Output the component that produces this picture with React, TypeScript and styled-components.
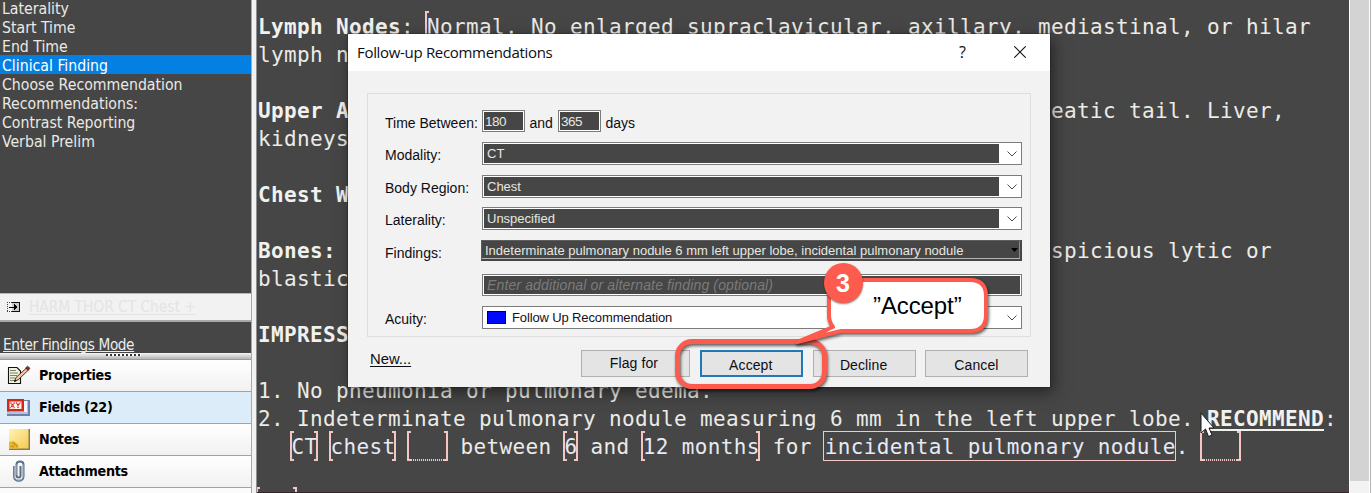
import React from "react";
import styled, { createGlobalStyle, css } from "styled-components";

const DARK = "#464646";
const PINK = "#f6c6c2";
const RED = "#fd5b4d";
const UI = `"DejaVu Sans Condensed", "DejaVu Sans", sans-serif`;
const ARIAL = `"Liberation Sans", sans-serif`;

const Global = createGlobalStyle`
  * { box-sizing: border-box; }
  body { margin: 0; overflow: hidden; background: ${DARK}; }
`;

const Page = styled.div`
  position: relative;
  display: flex;
  width: 1372px;
  height: 493px;
  overflow: hidden;
  background: #f0f0f0;
`;

/* ---------- sidebar ---------- */

const Sidebar = styled.aside`
  display: flex;
  flex-direction: column;
  width: 252px;
  border-right: 1px solid #a8a8a8;
  background: ${DARK};
  font-family: ${UI};
  overflow: hidden;
`;

const FieldList = styled.div`
  height: 295px;
  margin-top: -2px;
  flex: none;
`;

const FieldItem = styled.div<{ $active?: boolean }>`
  height: 19px;
  line-height: 22px;
  padding-left: 2px;
  font-size: 15.7px;
  white-space: nowrap;
  color: ${(p) => (p.$active ? "#ffffff" : "#ebe9e4")};
  background: ${(p) => (p.$active ? "#0380e2" : "transparent")};
`;

const TemplateBar = styled.div`
  display: flex;
  align-items: center;
  flex: none;
  gap: 9px;
  height: 29px;
  padding-left: 7px;
  background: #f2f2f2;
  border-top: 1px solid #b8b8b8;
  border-bottom: 2px solid #a9a9a9;
`;

const TemplateLink = styled.a`
  font-size: 15.3px;
  line-height: 20px;
  white-space: nowrap;
  color: #e3e4e6;
  text-decoration: underline;
  text-underline-offset: 2px;
`;

const ModeBar = styled.div`
  height: 31px;
  flex: none;
  padding: 13px 0 0 3px;
`;

const ModeLink = styled.a`
  display: block;
  font-size: 15.2px;
  letter-spacing: -0.4px;
  line-height: 20px;
  color: #ececea;
  text-decoration: underline;
  text-underline-offset: 1px;
  text-decoration-thickness: 1px;
  text-decoration-skip-ink: none;
  white-space: nowrap;
`;

const Splitter = styled.div`
  display: flex;
  flex: none;
  height: 7px;
  padding: 1px 0 0 106px;
  background: linear-gradient(#f4f4f4, #b4b4b4);
  border-bottom: 1px solid #9a9a9a;
`;

const Grip = styled.div`
  width: 35px;
  height: 2px;
  background: repeating-linear-gradient(90deg, #33333f 0 2px, #ffffff 2px 4px);
`;

const Tab = styled.div<{ $active?: boolean }>`
  display: flex;
  flex: none;
  align-items: center;
  height: 32px;
  padding: 0 0 2px 6px;
  border-bottom: 1px solid #a2a2a2;
  background: ${(p) => (p.$active ? "#dcecf9" : "linear-gradient(#ffffff, #f1f1f1)")};
`;

const TabIcon = styled.span`
  display: flex;
  width: 33px;
`;

const TabLabel = styled.span`
  font-size: 14.2px;
  letter-spacing: -0.3px;
  font-weight: bold;
  color: #000;
`;

const TabFiller = styled.div`
  flex: 1;
  background: #fbfbfb;
`;

const Gutter = styled.div`
  width: 5px;
  flex: none;
  background: #f1f1f1;
  border-right: 1px solid #8f8f8f;
`;

/* ---------- report ---------- */

const Report = styled.main`
  flex: 1;
  min-width: 0;
  padding: 12px 0 0 1px;
  background: ${DARK};
  border-bottom: 1px solid #33272b;
  overflow: hidden;
  font-family: "DejaVu Sans Mono", monospace;
  font-size: 21px;
  letter-spacing: 0.357px;
  color: #ecebe6;
`;

const Line = styled.div<{ $indent?: boolean }>`
  height: 28px;
  line-height: 30px;
  white-space: pre;
  padding-left: ${(p) => (p.$indent ? "33.5px" : "0")};
`;

const Tail = styled.span<{ $cols: number }>`
  margin-left: ${(p) => p.$cols * 13}px;
`;

const Strong = styled.b<{ $underline?: boolean }>`
  color: #f1f1ee;
  ${(p) =>
    p.$underline &&
    css`
      text-decoration: underline;
      text-decoration-thickness: 2px;
      text-underline-offset: 3px;
    `}
`;

const corner = (pos: string, size: string) =>
  `linear-gradient(${PINK}, ${PINK}) ${pos} / ${size} no-repeat`;

const Slot = styled.span<{ $kind?: "open" | "box" | "blank" }>`
  display: inline-block;
  height: 30px;
  line-height: 32px;
  vertical-align: top;
  margin: -1px 0 0 -2px;
  padding: 0 0 0 2px;
  color: #e6e9f6;
  background: ${(p) =>
    p.$kind === "box"
      ? "none"
      : [
          corner("left top", "2px 100%"),
          corner("left top", "4px 2px"),
          corner("left bottom", "4px 2px"),
          ...(p.$kind === "open"
            ? []
            : [
                corner("right top", "2px 100%"),
                corner("right top", "4px 2px"),
                corner("right bottom", "4px 2px"),
              ]),
          ...(p.$kind === "blank"
            ? [`repeating-linear-gradient(90deg, ${PINK} 0 1px, transparent 1px 2px) left bottom / 100% 2px no-repeat`]
            : []),
        ].join(", ")};
  box-shadow: ${(p) => (p.$kind === "box" ? `inset 0 0 0 1px ${PINK}` : "none")};
`;

const ScrollTrack = styled.div`
  width: 23px;
  flex: none;
  background: #f3f3f3;
  border-left: 1px solid #fff;
  padding-right: 3px;
  box-shadow: inset -1px 0 0 #fff, inset -2px 0 0 #b4b4b4, inset -3px 0 0 #fff;
`;

const ScrollThumb = styled.div`
  height: 481px;
  background: #d3d3d3;
`;

/* ---------- dialog ---------- */

const Dialog = styled.section`
  position: absolute;
  left: 348px;
  top: 34px;
  width: 702px;
  height: 353px;
  background: #f2f2f2;
  box-shadow: 0 0 0 1px rgba(30, 30, 30, 0.35), 3px 5px 14px rgba(0, 0, 0, 0.5);
  font-family: ${ARIAL};
  font-size: 14px;
  color: #0d0d14;
`;

const TitleBar = styled.header`
  display: flex;
  align-items: center;
  height: 37px;
  padding: 0 24px 1px 9px;
  background: #fff;
`;

const Title = styled.h1`
  flex: 1;
  margin: 0;
  font: 400 15px/20px "Open Sans", sans-serif;
  letter-spacing: -0.32px;
`;

const Help = styled.span`
  width: 10px;
  margin-right: 45px;
  font: 400 16px/20px "Open Sans", sans-serif;
`;

const Group = styled.div`
  height: 244px;
  margin: 22px 19px 0 19px;
  padding: 16px 8px 0 17px;
  border: 1px solid #dedede;
`;

const Row = styled.div<{ $gap?: number; $h?: number }>`
  display: flex;
  align-items: flex-start;
  height: ${(p) => p.$h ?? 23}px;
  margin-top: ${(p) => p.$gap ?? 0}px;
`;

const Label = styled.label`
  width: 97px;
  line-height: 16px;
  padding-top: 5px;
  white-space: nowrap;
`;

const NumberBox = styled.div`
  width: 43px;
  height: 22px;
  padding-left: 2px;
  border: 1px solid #7c7c7c;
  box-shadow: inset 0 0 0 1px #fff;
  background: ${DARK};
  color: #e8e6e0;
  font-size: 13.5px;
  line-height: 21px;
  letter-spacing: -0.5px;
`;

const Joiner = styled.span<{ $w: number }>`
  width: ${(p) => p.$w}px;
  padding: 5px 0 0 4.5px;
  line-height: 16px;
`;

const Combo = styled.div`
  display: flex;
  width: 540px;
  height: 23px;
  padding: 1px;
  border: 1px solid #7c7c7c;
  background: #fff;
  font-size: 13px;
`;

const ComboValue = styled.div<{ $light?: boolean }>`
  display: flex;
  align-items: center;
  flex: 1;
  gap: 6px;
  padding-left: 3px;
  background: ${(p) => (p.$light ? "#fff" : DARK)};
  color: ${(p) => (p.$light ? "#14101c" : "#e8e6e0")};
  letter-spacing: ${(p) => (p.$light ? "-0.13px" : "0")};
`;

const ComboArrow = styled.div`
  display: flex;
  align-items: center;
  justify-content: center;
  width: 21px;
  padding-left: 4px;
`;

const Swatch = styled.i`
  width: 19px;
  height: 13px;
  background: #0009fb;
  border: 1px solid #000040;
`;

const FindingsBox = styled.div`
  display: flex;
  flex: none;
  align-items: center;
  justify-content: space-between;
  width: 541px;
  height: 21px;
  padding: 0 2px 0 3px;
  background: ${DARK};
  border: 1px solid #5e5e5e;
  border-bottom: 2px solid ${DARK};
  border-right: 2px solid ${DARK};
  box-shadow: inset 0 -1px 0 #b5b5b5, inset -1px 0 0 #8a8a8a;
  color: #e8e6e0;
  font-size: 13px;
  letter-spacing: 0.01px;
  white-space: nowrap;
`;

const HintBox = styled.div`
  width: 540px;
  height: 22px;
  padding-left: 4px;
  border: 1px solid #7c7c7c;
  box-shadow: inset 0 0 0 1px #fff;
  background: ${DARK};
  color: #7b7b7b;
  font-style: italic;
  line-height: 21px;
  letter-spacing: 0.14px;
`;

const Footer = styled.footer`
  display: flex;
  padding: 13px 0 0 22px;
`;

const NewLink = styled.a`
  width: 211px;
  font-size: 14.8px;
  line-height: 19px;
  text-decoration: underline;
  text-underline-offset: 2px;
`;

const Button = styled.button<{ $default?: boolean; $w?: number }>`
  width: ${(p) => p.$w ?? 103}px;
  height: 27px;
  margin: 0 9.8px 0 0;
  padding: ${(p) => (p.$w ? "0 3px 2px 0" : "2px 1px 0 0")};
  border: ${(p) => (p.$default ? "2px solid #1f78b9" : "1px solid #b0b0b0")};
  background: #e4e4e4;
  color: #0d0d14;
  font: 14px ${ARIAL};
  letter-spacing: 0.1px;
  flex: none;
`;

/* ---------- annotation ---------- */

const Ring = styled.div`
  position: absolute;
  left: 675px;
  top: 339px;
  width: 152px;
  height: 50px;
  border: 5px solid ${RED};
  border-radius: 17px;
  filter: drop-shadow(1px 2px 1.5px rgba(0, 0, 0, 0.6));
`;

const Callout = styled.div`
  position: absolute;
  left: 790px;
  top: 258px;
  width: 206px;
  height: 94px;
`;

const CalloutShape = styled.svg`
  display: block;
  filter: drop-shadow(1px 2px 1.5px rgba(0, 0, 0, 0.6));
`;

const CalloutText = styled.span`
  position: absolute;
  left: 83px;
  top: 34px;
  font: 24px/28px ${ARIAL};
  letter-spacing: -0.1px;
  color: #000;
`;

const Badge = styled.span`
  position: absolute;
  left: 33.5px;
  top: 4.5px;
  width: 39px;
  height: 40px;
  border-radius: 50%;
  background: ${RED};
  color: #fff;
  font: bold 25px/41px ${ARIAL};
  text-align: center;
  box-shadow: 0 1px 2px rgba(0, 0, 0, 0.5);
`;

const Cursor = styled.svg`
  position: absolute;
  left: 1200px;
  top: 412px;
`;

/* ---------- icons ---------- */

const InsertIcon = () => (
  <svg width="13" height="10" viewBox="0 0 13 10" shapeRendering="crispEdges">
    <path d="M0 .5H5M0 9.5H5M.5 0V10" stroke="#444" strokeDasharray="1 1" fill="none" />
    <path d="M5 .5H12.5V9.5H5" stroke="#111" fill="#c9c9c9" />
    <path d="M2 5H8" stroke="#000" strokeWidth="1" />
    <path d="M7 2V8L10 5Z" fill="#000" />
  </svg>
);

const PropertiesIcon = () => (
  <svg width="25" height="20" viewBox="0 0 25 20">
    <path d="M2.5 2.5H11L14.5 6V18.5H2.5Z" fill="#f1f2dc" stroke="#111" strokeWidth="1.1" />
    <path d="M4 5.5H10M4 8H12M4 10.5H11M4 13H9M4 15.5H9" stroke="#7c8164" strokeWidth="1" />
    <path d="M8.5 16.5L10 12.500L20.500 3L22.500 5L12.500 14.500Z" fill="#f0c7a4" stroke="#31201c" strokeWidth=".9" />
    <path d="M19.5 3L21.5 1.2L24 3.3L22 5.5Z" fill="#8f2a22" stroke="#4a1210" strokeWidth=".7" />
    <path d="M8 17L9 14.5L10.5 16Z" fill="#111" />
  </svg>
);

const FieldsIcon = () => (
  <svg width="25" height="18" viewBox="0 0 25 18">
    <path d="M4 2H24V18H1V14H4Z" fill="#6b82ab" />
    <path d="M1 3H22V16H1Z" fill="#b4c2da" />
    <path d="M4 3H21V14H4Z" fill="#f4f6fb" />
    <rect x="2.250" y="2.250" width="14.500" height="10" fill="#fff2ee" stroke="#d3261b" strokeWidth="2.500" />
    <path d="M4.500 4.500L8.500 10M8.500 4.500L4.500 10M10 4.500L12 7L14.500 4.500M12 6.500V10" stroke="#cf3022" strokeWidth="1.400" strokeDasharray="1.500 .5" fill="none" />
  </svg>
);

const NotesIcon = () => (
  <svg width="25" height="22" viewBox="0 0 25 22">
    <defs>
      <linearGradient id="note" x1="0" y1="0" x2="1" y2="1">
        <stop offset="0" stopColor="#fff3b4" />
        <stop offset="1" stopColor="#f4cb52" />
      </linearGradient>
    </defs>
    <rect x="3" y="1" width="21" height="21" fill="#8b7a4c" />
    <rect x="3" y="1" width="19.500" height="19.500" fill="url(#note)" />
    <path d="M3 14C6 12.500 9 13 9.500 15C12 15 13 17.500 12.500 20.500H3Z" fill="#edb52c" />
    <path d="M6 15.500C8 14 10 15 8.500 17C10.500 16.500 12 18 10 19M5 18L8 19" stroke="#c08710" fill="none" />
  </svg>
);

const ClipIcon = () => (
  <svg width="25" height="22" viewBox="0 0 25 22" fill="none">
    <path d="M8 6V16.5C8 22 17.5 22 17.5 16.5V4.500C17.5 .5 10.5 .5 10.5 4.500V15.5C10.5 18.2 14.5 18.2 14.5 15.5V6" stroke="#5b6f89" strokeWidth="2" />
    <path d="M8.300 6V16.5C8.300 21.3 17 21.3 17 16.5V4.500M11 4.500V15" stroke="#c0ccd9" strokeWidth=".8" />
  </svg>
);

const Chevron = () => (
  <svg width="10" height="6" viewBox="0 0 10 6">
    <path d="M.5 .5L5 5L9.5 .5" stroke="#4a4a4a" strokeWidth="1" fill="none" />
  </svg>
);

const CloseIcon = () => (
  <svg width="12" height="12" viewBox="0 0 12 12">
    <path d="M.3 .3L11.700 11.700M11.700 .3L.3 11.700" stroke="#111" strokeWidth="1.1" />
  </svg>
);

/* ---------- data ---------- */

const fields = [
  "Laterality",
  "Start Time",
  "End Time",
  "Clinical Finding",
  "Choose Recommendation",
  "Recommendations:",
  "Contrast Reporting",
  "Verbal Prelim",
];

const tabs = [
  { label: "Properties", icon: <PropertiesIcon /> },
  { label: "Fields (22)", icon: <FieldsIcon />, active: true },
  { label: "Notes", icon: <NotesIcon /> },
  { label: "Attachments", icon: <ClipIcon /> },
];

const combos = [
  { label: "Modality:", value: "CT", gap: 10 },
  { label: "Body Region:", value: "Chest", gap: 10 },
  { label: "Laterality:", value: "Unspecified", gap: 9 },
];

export default function App() {
  return (
    <Page>
      <Global />
      <Sidebar>
        <FieldList>
          {fields.map((f) => (
            <FieldItem key={f} $active={f === "Clinical Finding"}>
              {f}
            </FieldItem>
          ))}
        </FieldList>
        <TemplateBar>
          <InsertIcon />
          <TemplateLink>HARM THOR CT Chest +</TemplateLink>
        </TemplateBar>
        <ModeBar>
          <ModeLink as="span">Enter Findings Mode</ModeLink>
        </ModeBar>
        <Splitter>
          <Grip />
        </Splitter>
        {tabs.map((t) => (
          <Tab key={t.label} $active={t.active}>
            <TabIcon>{t.icon}</TabIcon>
            <TabLabel>{t.label}</TabLabel>
          </Tab>
        ))}
        <TabFiller />
      </Sidebar>
      <Gutter />

      <Report>
        <Line>
          <Strong>Lymph Nodes</Strong>: <Slot $kind="open">N</Slot>ormal. No enlarged supraclavicular, axillary, mediastinal, or hilar
        </Line>
        <Line>lymph n</Line>
        <Line />
        <Line>
          <Strong>Upper A</Strong>
          <Tail $cols={54}>eatic tail. Liver,</Tail>
        </Line>
        <Line>kidneys</Line>
        <Line />
        <Line>
          <Strong>Chest W</Strong>
        </Line>
        <Line />
        <Line>
          <Strong>Bones:</Strong>
          <Tail $cols={55}>spicious lytic or</Tail>
        </Line>
        <Line>blastic</Line>
        <Line />
        <Line>
          <Strong>IMPRESS</Strong>
        </Line>
        <Line />
        <Line>1. No pneumonia or pulmonary edema.</Line>
        <Line>
          2. Indeterminate pulmonary nodule measuring 6 mm in the left upper lobe. <Strong $underline>RECOMMEND</Strong>:
        </Line>
        <Line $indent>
          <Slot>CT</Slot> <Slot>chest</Slot> <Slot $kind="blank">{"   "}</Slot> between <Slot>6</Slot> and{" "}
          <Slot>12 months</Slot> for <Slot $kind="box">incidental pulmonary nodule</Slot>. <Slot $kind="blank">{"   "}</Slot>
        </Line>
        <Line />
        <Line>
          <Slot $kind="blank">{"   "}</Slot>
        </Line>
      </Report>
      <ScrollTrack>
        <ScrollThumb />
      </ScrollTrack>

      <Dialog>
        <TitleBar>
          <Title>Follow-up Recommendations</Title>
          <Help>?</Help>
          <CloseIcon />
        </TitleBar>
        <Group>
          <Row $h={22}>
            <Label>Time Between:</Label>
            <NumberBox>180</NumberBox>
            <Joiner $w={33}>and</Joiner>
            <NumberBox>365</NumberBox>
            <Joiner $w={40}>days</Joiner>
          </Row>
          {combos.map((c) => (
            <Row key={c.label} $gap={c.gap}>
              <Label>{c.label}</Label>
              <Combo>
                <ComboValue>{c.value}</ComboValue>
                <ComboArrow>
                  <Chevron />
                </ComboArrow>
              </Combo>
            </Row>
          ))}
          <Row $gap={10} $h={22}>
            <Label>Findings:</Label>
            <FindingsBox>
              Indeterminate pulmonary nodule 6 mm left upper lobe, incidental pulmonary nodule
              <svg width="7" height="4" viewBox="0 0 7 4">
                <path d="M0 0H7L3.5 4Z" fill="#000" />
              </svg>
            </FindingsBox>
          </Row>
          <Row $gap={12} $h={22}>
            <Label />
            <HintBox>Enter additional or alternate finding (optional)</HintBox>
          </Row>
          <Row $gap={10}>
            <Label>Acuity:</Label>
            <Combo>
              <ComboValue $light>
                <Swatch />
                Follow Up Recommendation
              </ComboValue>
              <ComboArrow>
                <Chevron />
              </ComboArrow>
            </Combo>
          </Row>
        </Group>
        <Footer>
          <NewLink>New...</NewLink>
          <Button $w={109}>Flag for</Button>
          <Button $default>Accept</Button>
          <Button>Decline</Button>
          <Button>Cancel</Button>
        </Footer>
      </Dialog>

      <Ring />
      <Callout>
        <CalloutShape width="206" height="94" viewBox="0 0 206 94">
          <path
            d="M55 22H180Q196 22 196 38V57Q196 73 180 73H51L7 84L43 69Q39 64 39 57V38Q39 22 55 22Z"
            fill="#fff"
            stroke={RED}
            strokeWidth="4"
            strokeLinejoin="round"
          />
          <path d="M6 84L43 68L36 75Z" fill={RED} />
        </CalloutShape>
        <CalloutText>”Accept”</CalloutText>
        <Badge>3</Badge>
      </Callout>

      <Cursor width="15" height="26" viewBox="0 0 15 26">
        <path d="M1 1V21L5.5 17L8.5 24.5L12 23L9 16H14Z" fill="#fff" stroke="#1b1b1b" strokeWidth="1" />
      </Cursor>
    </Page>
  );
}
